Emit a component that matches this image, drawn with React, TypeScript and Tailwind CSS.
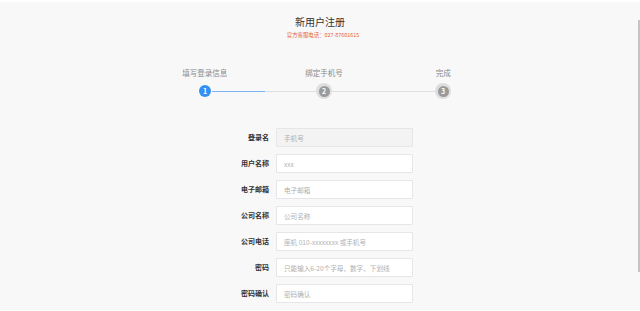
const fields = [
  { label: '登录名', placeholder: '手机号', disabled: true },
  { label: '用户名称', placeholder: 'xxx' },
  { label: '电子邮箱', placeholder: '电子邮箱' },
  { label: '公司名称', placeholder: '公司名称' },
  { label: '公司电话', placeholder: '座机 010-xxxxxxxx 或手机号' },
  { label: '密码', placeholder: '只能输入6-20个字母、数字、下划线' },
  { label: '密码确认', placeholder: '密码确认' },
];

const steps = ['填写登录信息', '绑定手机号', '完成'];

function GrayStep({ n }: { n: number }) {
  return (
    <div className="flex h-[16px] w-[16px] shrink-0 items-center justify-center rounded-full bg-[#dedede]">
      <div className="flex h-[11px] w-[11px] items-center justify-center rounded-full bg-[#9a9a9a] text-[7px] font-bold leading-none text-white">
        {n}
      </div>
    </div>
  );
}

export default function App() {
  return (
    <div
      className="relative h-[311px] w-[640px] overflow-hidden bg-white"
      style={{ fontFamily: '"Noto Sans CJK SC", "Liberation Sans", sans-serif' }}
    >
      <div className="mt-[2px] flex h-[308px] flex-col items-center bg-[#f8f8f8]">
        {/* Header */}
        <h1 className="mt-[13px] text-[10px] leading-[14px] text-[#333]">新用户注册</h1>
        <p className="ml-[6px] mt-[2px] text-[5.4px] leading-[8px] text-[#e5603f]">官方客服电话：027-87601615</p>

        {/* Steps */}
        <div className="ml-[8px] mt-[29px] w-[358px]">
          <div className="grid grid-cols-3 text-center text-[7.5px] leading-[10px] text-[#888]">
            {steps.map((s) => (
              <span key={s}>{s}</span>
            ))}
          </div>
          <div className="mt-[5px] flex h-[16px] items-center pl-[54px] pr-[52px]">
            <div className="flex h-[12px] w-[12px] shrink-0 items-center justify-center rounded-full bg-[#3590f3] text-[7px] font-bold leading-none text-white">
              1
            </div>
            <div className="ml-[1px] h-px w-[53px] bg-[#7fb4f2]" />
            <div className="h-px w-[51px] bg-[#e0e0e0]" />
            <GrayStep n={2} />
            <div className="h-px flex-1 bg-[#e0e0e0]" />
            <GrayStep n={3} />
          </div>
        </div>

        {/* Form */}
        <div className="mr-[18px] mt-[29px] flex flex-col gap-[7px]">
          {fields.map((f) => (
            <div key={f.label} className="flex items-center gap-[7px]">
              <label className="w-[60px] text-right text-[7px] font-bold text-[#333]">{f.label}</label>
              <input
                disabled={f.disabled}
                placeholder={f.placeholder}
                className={`h-[19px] w-[137px] rounded-[1px] border border-[#e6e6e6] px-[7px] text-[6.6px] outline-none placeholder:text-[#b0b0b0] ${
                  f.disabled ? 'bg-[#f3f3f3]' : 'bg-white'
                }`}
              />
            </div>
          ))}
        </div>
      </div>

      {/* scrollbar */}
      <div className="absolute right-0 top-[20px] h-[252px] w-[2px] bg-[#c4c4c4]" />
    </div>
  );
}
